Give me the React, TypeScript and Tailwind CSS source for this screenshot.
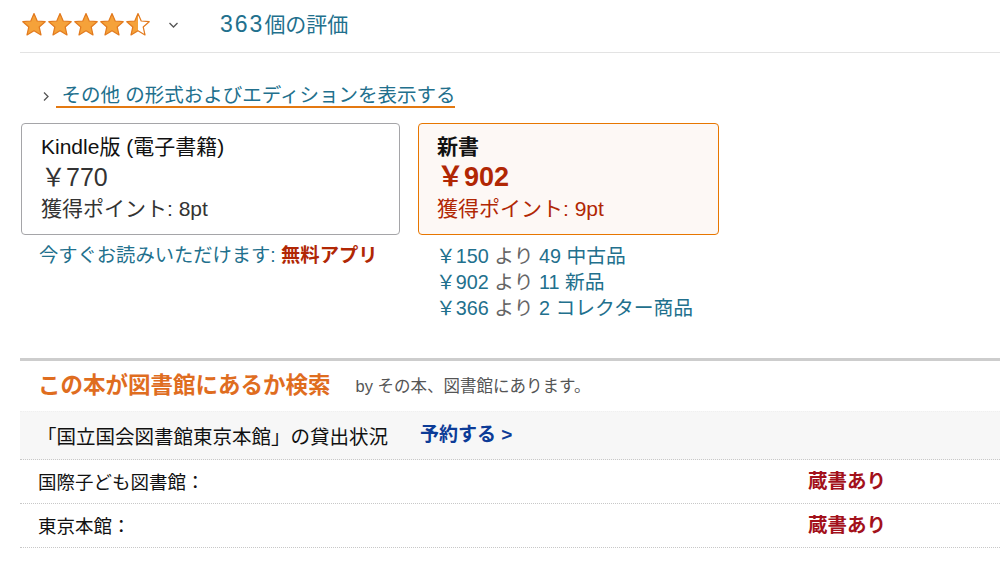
import React from "react";

const FONT = { fontFamily: '"Liberation Sans", "Noto Sans CJK JP", sans-serif' };
const CJK = { fontFamily: '"Noto Sans CJK JP", sans-serif' };

const STAR = "M13 1.6 L16.2 9 L24.2 9.7 L18.2 15 L20 22.9 L13 18.7 L6 22.9 L7.8 15 L1.8 9.7 L9.8 9 Z";

function Star({ half = false }: { half?: boolean }) {
  return (
    <svg width="26" height="25" viewBox="0 0 26 25">
      <defs>
        <clipPath id="halfclip">
          <rect x="0" y="0" width="13" height="25" />
        </clipPath>
      </defs>
      {half ? (
        <>
          <path d={STAR} fill="#ffffff" />
          <path d={STAR} fill="#f5a23a" clipPath="url(#halfclip)" />
          <path d={STAR} fill="none" stroke="#e27a1e" strokeWidth="1.2" strokeLinejoin="round" />
        </>
      ) : (
        <path d={STAR} fill="#f5a23a" stroke="#e27a1e" strokeWidth="1.2" strokeLinejoin="round" />
      )}
    </svg>
  );
}

export default function App() {
  return (
    <div className="w-[1000px] h-[574px] overflow-hidden bg-white text-[#111]" style={FONT}>
      <div className="pl-[20px]">
        {/* rating header */}
        <div className="h-[53px] border-b border-[#e3e3e3] flex items-center pb-[4px]">
          <div className="flex items-center pl-[1px]">
            <Star />
            <Star />
            <Star />
            <Star />
            <Star half />
          </div>
          <svg className="ml-[17px] mt-[1px]" width="11" height="8" viewBox="0 0 11 8">
            <path d="M1.5 2 L5.5 6 L9.5 2" fill="none" stroke="#555" strokeWidth="1.3" />
          </svg>
          <span className="ml-[41px] text-[21px] leading-none text-[#22708d]">
            <span className="text-[23px] tracking-[2px]">363</span>個の評価
          </span>
        </div>

        {/* other formats link */}
        <div className="mt-[30px] flex items-center pl-[22px] h-[26px]">
          <svg width="8" height="11" viewBox="0 0 8 11">
            <path d="M2 1.5 L6 5.5 L2 9.5" fill="none" stroke="#555" strokeWidth="1.3" />
          </svg>
          <span className="ml-[6px] text-[19.5px] leading-[22px] text-[#22708d] border-b-[2px] border-[#e47911]">
            &nbsp;その他 の形式およびエディションを表示する
          </span>
        </div>

        {/* format boxes */}
        <div className="mt-[14px] flex gap-[18px] pl-[1px]">
          <div className="w-[379px]">
            <div className="h-[112px] border border-[#a5a5a8] rounded-[4px] pt-[7px] pl-[19px] text-[21px] leading-[31px]">
              <div className="text-[#111]">Kindle版 (電子書籍)</div>
              <div className="text-[25px] text-[#333]">￥770</div>
              <div className="text-[#333]">獲得ポイント: 8pt</div>
            </div>
            <div className="mt-[8px] pl-[18px] text-[19.3px] leading-[26px] text-[#22708d]">
              今すぐお読みいただけます: <span className="font-bold text-[#b12704]">無料アプリ</span>
            </div>
          </div>
          <div className="w-[301px]">
            <div className="h-[112px] border border-[#e77600] rounded-[4px] bg-[#fdf8f5] pt-[7px] pl-[18px] text-[21px] leading-[31px]">
              <div className="font-bold text-[#111]">新書</div>
              <div className="font-bold text-[27px] text-[#b12704]">￥902</div>
              <div className="text-[#b12704]">獲得ポイント: 9pt</div>
            </div>
            <div className="mt-[8px] pl-[18px] text-[19.8px] leading-[26px] text-[#22708d]">
              <div>￥150 <span className="text-[#666]">より</span> 49 中古品</div>
              <div>￥902 <span className="text-[#666]">より</span> 11 新品</div>
              <div>￥366 <span className="text-[#666]">より</span> 2 コレクター商品</div>
            </div>
          </div>
        </div>

        {/* library section */}
        <div className="mt-[37px] border-t-[3px] border-[#cdcdcd]">
          <div className="h-[50px] flex items-center pl-[18px] pt-[1px]">
            <span className="text-[22.5px] font-bold text-[#df6d1f] leading-none">この本が図書館にあるか検索</span>
            <span className="ml-[25px] text-[16.5px] text-[#555] leading-none">by その本、図書館にあります。</span>
          </div>
          <div className="h-[49px] bg-[#f7f7f7] border-t border-[#f0f0f0] border-b border-dotted border-b-[#c8c8c8] flex items-center pl-[17px]">
            <span className="text-[19.5px] text-[#111] w-[383px]" style={CJK}>「国立国会図書館東京本館」の貸出状況</span>
            <span className="text-[19px] font-bold text-[#0d3c97]">予約する &gt;</span>
          </div>
          <div className="h-[44px] border-b border-dotted border-[#c8c8c8] flex items-center pl-[18px]">
            <span className="text-[18.5px] text-[#111] w-[770px]" style={CJK}>国際子ども図書館：</span>
            <span className="text-[19.5px] font-bold text-[#a3111b]">蔵書あり</span>
          </div>
          <div className="h-[44px] border-b border-dotted border-[#c8c8c8] flex items-center pl-[18px]">
            <span className="text-[18.5px] text-[#111] w-[770px]" style={CJK}>東京本館：</span>
            <span className="text-[19.5px] font-bold text-[#a3111b]">蔵書あり</span>
          </div>
        </div>
      </div>
    </div>
  );
}
